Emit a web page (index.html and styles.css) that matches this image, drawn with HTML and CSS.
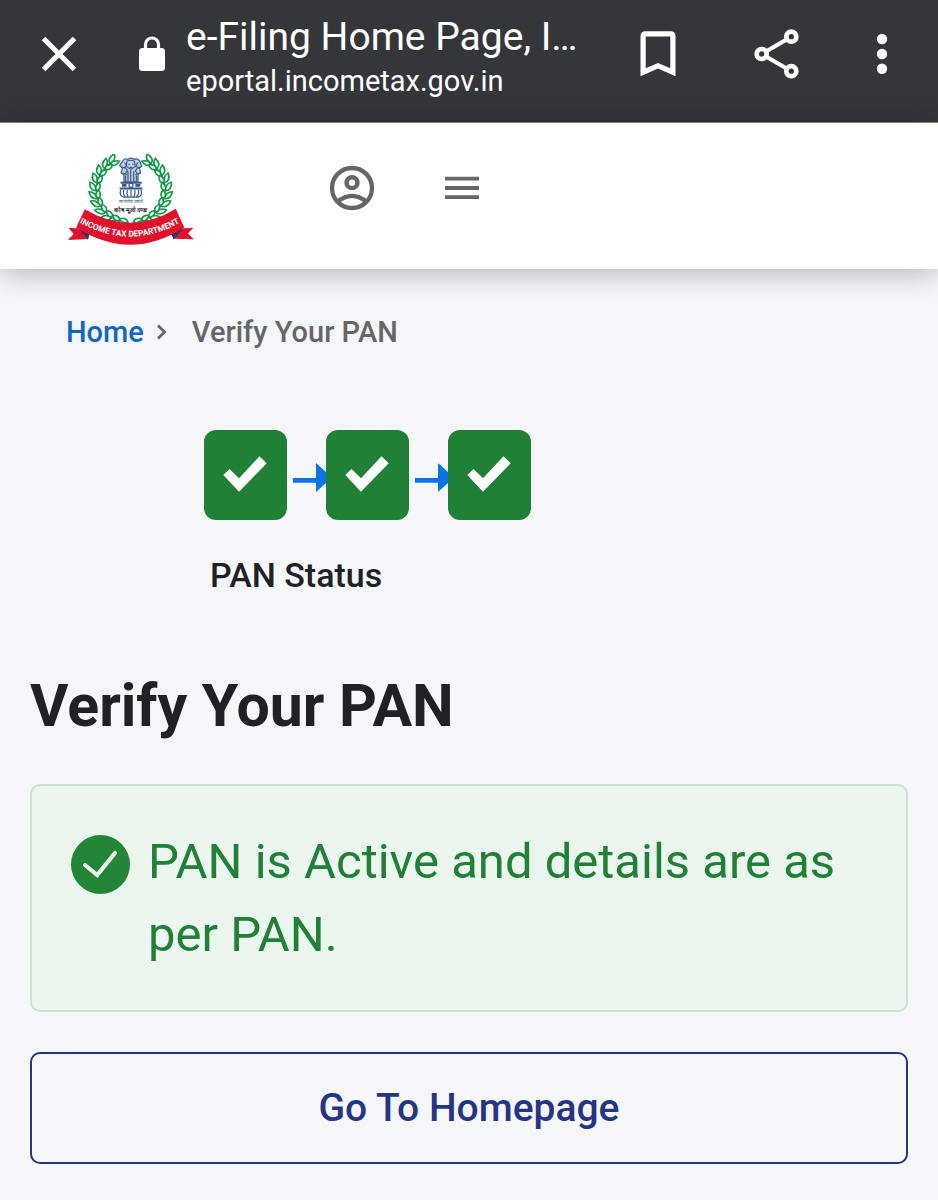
FILE: index.html
```html
<!DOCTYPE html>
<html lang="en">
<head>
    <meta charset="UTF-8">
    <meta name="viewport" content="width=device-width, initial-scale=1.0">
    <title>e-Filing Home Page</title>
    <link rel="stylesheet" href="styles.css">
</head>
<body>
    <div class="browser-bar">
        <button class="icon-btn" aria-label="Close">
            <svg width="48" height="48" viewBox="0 0 48 48"><path d="M8.500 8.500 39.500 39.500M39.500 8.500 8.500 39.500" fill="none" stroke="#fff" stroke-width="5"/></svg>
        </button>
        <svg class="lock" width="28" height="36" viewBox="0 0 28 36"><rect x="1" y="12" width="26" height="23" rx="3.500" fill="#fff"/><path d="M7.500 14V8.500a6.500 6.500 0 0 1 13 0V14" fill="none" stroke="#fff" stroke-width="3.200"/></svg>
        <div class="page-info">
            <div class="page-title">e-Filing Home Page, I…</div>
            <div class="page-url">eportal.incometax.gov.in</div>
        </div>
        <div class="browser-actions">
            <button class="icon-btn" aria-label="Bookmark">
                <svg width="48" height="48" viewBox="0 0 48 48"><path fill="#fff" fill-rule="evenodd" d="M11 1.300h26a4.500 4.500 0 0 1 4.500 4.500v40.500L24 38.500 6.500 46.300V5.800A4.500 4.500 0 0 1 11 1.300zM11.700 6.500v31.700L24 33l12.300 5.200V6.500z"/></svg>
            </button>
            <button class="icon-btn" aria-label="Share">
                <svg width="48" height="50" viewBox="0 0 48 50" fill="none" stroke="#fff"><path d="M39.300 7.700 9.700 25l29.600 17.200" stroke-width="4.200"/><g fill="#35363a" stroke-width="4.700"><circle cx="39.300" cy="7.700" r="5"/><circle cx="9.700" cy="25" r="5"/><circle cx="39.300" cy="42.200" r="5"/></g></svg>
            </button>
            <button class="icon-btn" aria-label="More options">
                <svg width="48" height="48" viewBox="0 0 48 48" fill="#fff"><circle cx="24" cy="9" r="5.200"/><circle cx="24" cy="24" r="5.200"/><circle cx="24" cy="38.800" r="5.200"/></svg>
            </button>
        </div>
    </div>

    <header class="site-header">
        <a class="logo" href="#" aria-label="Income Tax Department">
            <svg width="128" height="93" viewBox="22 27 380 278">
                <defs>
                    <g id="leaf" fill="#e4f5ea" stroke="#149447" stroke-width="4.500">
                        <path d="M-2-98q2-19 26-17q-5 18-26 17z"/>
                        <path d="M-2-95q10-10 26 6q-19 9-26-6z"/>
                    </g>
                    <g id="branch">
                        <path d="M-42-88A97 97 0 0 0-16 95" fill="none" stroke="#149447" stroke-width="4"/>
                        <use href="#leaf" transform="rotate(-174)"/>
                        <use href="#leaf" transform="rotate(-160)"/>
                        <use href="#leaf" transform="rotate(-146)"/>
                        <use href="#leaf" transform="rotate(-132)"/>
                        <use href="#leaf" transform="rotate(-118)"/>
                        <use href="#leaf" transform="rotate(-104)"/>
                        <use href="#leaf" transform="rotate(-90)"/>
                        <use href="#leaf" transform="rotate(-76)"/>
                        <use href="#leaf" transform="rotate(-62)"/>
                        <use href="#leaf" transform="rotate(-48)"/>
                        <use href="#leaf" transform="rotate(-35)"/>
                    </g>
                    <path id="ribbon-line" d="M52 229Q212 319 364 229"/>
                </defs>
                <g transform="translate(211 135)">
                    <use href="#branch" transform="scale(1.060 1)"/>
                    <use href="#branch" transform="scale(-1.060 1)"/>
                </g>
                <!-- lion capital -->
                <g fill="none" stroke="#35598c" stroke-width="3.500">
                    <path d="M188 47q6-9 14-4q9-7 19 0q11-5 17 5l6 15-7 6 4 14-8 5v22h-42V89l-9-6 5-13-9-8z" fill="#c3d0e2"/>
                    <path d="M192 53q10 6 2 14l7 8-6 11M200 48q11-5 22 1l3 15-13 9-14-9zM234 52q-10 7-2 16l-7 9 6 9M204 58h4M216 58h4M208 67h8M184 65l10 4M240 66l-10 4M203 78v30M211 75v33M220 78v30M196 91v17M228 91v17M188 84l12 5M238 84l-13 5"/>
                    <path d="M181 113h63M178 130h68" stroke-width="6"/>
                    <circle cx="212" cy="121" r="6"/>
                    <path d="M185 121h14M225 121h15" stroke-width="8"/>
                    <path d="M181 134q-5 17 9 22h43q15-5 9-22M190 134q-3 15 6 20M201 134q-3 14 3 20M212 134v20M223 134q3 14-3 20M234 134q4 14-6 20"/>
                </g>
                <text x="212" y="173" class="motto-small">सत्यमेव जयते</text>
                <text x="212" y="199" class="motto">कोष मूलो दण्डः</text>
                <path d="M80 250 25 248l16 18-18 18 62-3zM342 250l56-2-16 17 18 17-62-2z" fill="#e1112b"/>
                <path d="M56 249l27 34 8-24zM368 249l-28 33-11-20z" fill="#203979"/>
                <path d="M74 192Q211 274 346 191l25 56Q211 350 48 247z" fill="#e1112b"/>
                <text class="ribbon-text"><textPath href="#ribbon-line" startOffset="50%">INCOME TAX DEPARTMENT</textPath></text>
            </svg>
        </a>
        <button class="icon-btn account-btn" aria-label="Account">
            <svg width="48" height="48" viewBox="0 0 48 48" fill="none" stroke="#666"><circle cx="24" cy="24" r="20" stroke-width="4.300"/><circle cx="24" cy="18.700" r="5.400" stroke-width="4.500"/><path d="M9.500 37.500q14.500-11 29 0" stroke-width="4.500"/></svg>
        </button>
        <button class="icon-btn menu-btn" aria-label="Menu">
            <svg width="48" height="48" viewBox="0 0 48 48"><path d="M7 14.700h34M7 24h34M7 33.200h34" stroke="#666" stroke-width="3.800"/></svg>
        </button>
    </header>

    <main class="content">
        <nav class="breadcrumb" aria-label="Breadcrumb">
            <a href="#">Home</a>
            <svg width="12" height="18" viewBox="0 0 12 18"><path d="M2 2.500 8.500 9 2 15.500" fill="none" stroke="#666" stroke-width="2.800"/></svg>
            <span>Verify Your PAN</span>
        </nav>

        <div class="stepper">
            <div class="steps">
                <div class="step"><svg width="83" height="90" viewBox="0 0 83 90"><path d="M19.300 45 25.500 39l9.500 9.300 20.500-22 7.200 7L35 61.700z" fill="#fff"/></svg></div>
                <svg class="arrow" width="33" height="30" viewBox="0 0 33 30"><path d="M0 15h23V0l16 14.500L23 29v-9.200H0z" fill="#0b72e7"/></svg>
                <div class="step"><svg width="83" height="90" viewBox="0 0 83 90"><path d="M19.300 45 25.500 39l9.500 9.300 20.500-22 7.200 7L35 61.700z" fill="#fff"/></svg></div>
                <svg class="arrow" width="33" height="30" viewBox="0 0 33 30"><path d="M0 15h23V0l16 14.500L23 29v-9.200H0z" fill="#0b72e7"/></svg>
                <div class="step"><svg width="83" height="90" viewBox="0 0 83 90"><path d="M19.300 45 25.500 39l9.500 9.300 20.500-22 7.200 7L35 61.700z" fill="#fff"/></svg></div>
            </div>
            <div class="step-label">PAN Status</div>
        </div>

        <h1>Verify Your PAN</h1>

        <div class="alert" role="status">
            <svg class="alert-icon" width="59" height="59" viewBox="0 0 59 59"><circle cx="29.500" cy="29.500" r="29.500" fill="#238636"/><path d="M14 30l12.200 10L44 18" fill="none" stroke="#eaf7ee" stroke-width="4.200" stroke-linecap="round"/></svg>
            <p>PAN is Active and details are as per PAN.</p>
        </div>

        <button class="home-btn">Go To Homepage</button>
    </main>
</body>
</html>
```
FILE: styles.css
```css
* {
    box-sizing: border-box;
}

body {
    margin: 0;
    font-family: Roboto, sans-serif;
    background-color: #f5f7fb;
    color: #202124;
}

svg {
    display: block;
    flex-shrink: 0;
}

.icon-btn {
    padding: 0;
    border: none;
    background: none;
    cursor: pointer;
}

/* Browser bar */
.browser-bar {
    display: flex;
    align-items: center;
    height: 123px;
    padding: 0 32px 14px 35px;
    background-color: #35363a;
    border-bottom: 1px solid #8a8a8c;
    color: #fff;
}

.lock {
    margin-left: 55px;
}

.page-info {
    flex: 1;
    min-width: 0;
    margin-left: 20px;
    padding-top: 7px;
    white-space: nowrap;
}

.page-title {
    font-size: 39px;
    line-height: 46px;
}

.page-url {
    font-size: 29px;
    line-height: 42px;
}

.browser-actions {
    display: flex;
    align-items: center;
}

.browser-actions .icon-btn + .icon-btn {
    margin-left: 58px;
}

.browser-actions .icon-btn:nth-child(2) {
    margin-left: 70px;
}

/* Site header */
.site-header {
    display: flex;
    align-items: flex-start;
    position: relative;
    padding: 31px 67px 22px;
    background-color: #fff;
    box-shadow: 0 4px 28px rgba(0, 0, 0, 0.28);
}

.account-btn {
    margin: 10px 0 0 133px;
}

.menu-btn {
    margin: 10px 0 0 62px;
}

.motto-small,
.motto,
.ribbon-text {
    text-anchor: middle;
}

.motto-small {
    font-size: 14px;
    fill: #35598c;
}

.motto {
    font-size: 18px;
    font-weight: bold;
    fill: #222;
}

.ribbon-text {
    font-size: 25px;
    font-weight: bold;
    fill: #fff;
}

/* Content */
.content {
    padding: 43px 30px 36px;
}

.breadcrumb {
    display: flex;
    align-items: center;
    padding-left: 36px;
    font-size: 29px;
    font-weight: 500;
    line-height: 40px;
    color: #666;
}

.breadcrumb a {
    color: #1267c1;
    text-decoration: none;
}

.breadcrumb svg {
    margin: 0 24px 0 12px;
}

.stepper {
    padding: 78px 0 0 174px;
}

.steps {
    display: flex;
    align-items: center;
}

.step {
    border-radius: 12px;
    background-color: #208035;
}

.arrow {
    margin: 6px 0 0 6px;
}

.step-label {
    margin-top: 35px;
    padding-left: 6px;
    font-size: 34px;
    font-weight: 500;
    line-height: 40px;
}

h1 {
    margin: 76px 0 43px;
    font-size: 59px;
    line-height: 70px;
}

.alert {
    display: flex;
    align-items: flex-start;
    padding: 39px;
    border: 2px solid #cbe2d1;
    border-radius: 10px;
    background-color: #ebf6ee;
    color: #208035;
}

.alert-icon {
    margin-top: 10px;
}

.alert p {
    margin: 0 0 0 18px;
    font-size: 49px;
    line-height: 73px;
}

.home-btn {
    display: block;
    width: 100%;
    margin-top: 40px;
    padding: 30px;
    border: 2px solid #253584;
    border-radius: 10px;
    background: none;
    font-family: inherit;
    font-size: 39px;
    font-weight: 500;
    line-height: 48px;
    color: #253584;
    cursor: pointer;
}
```
